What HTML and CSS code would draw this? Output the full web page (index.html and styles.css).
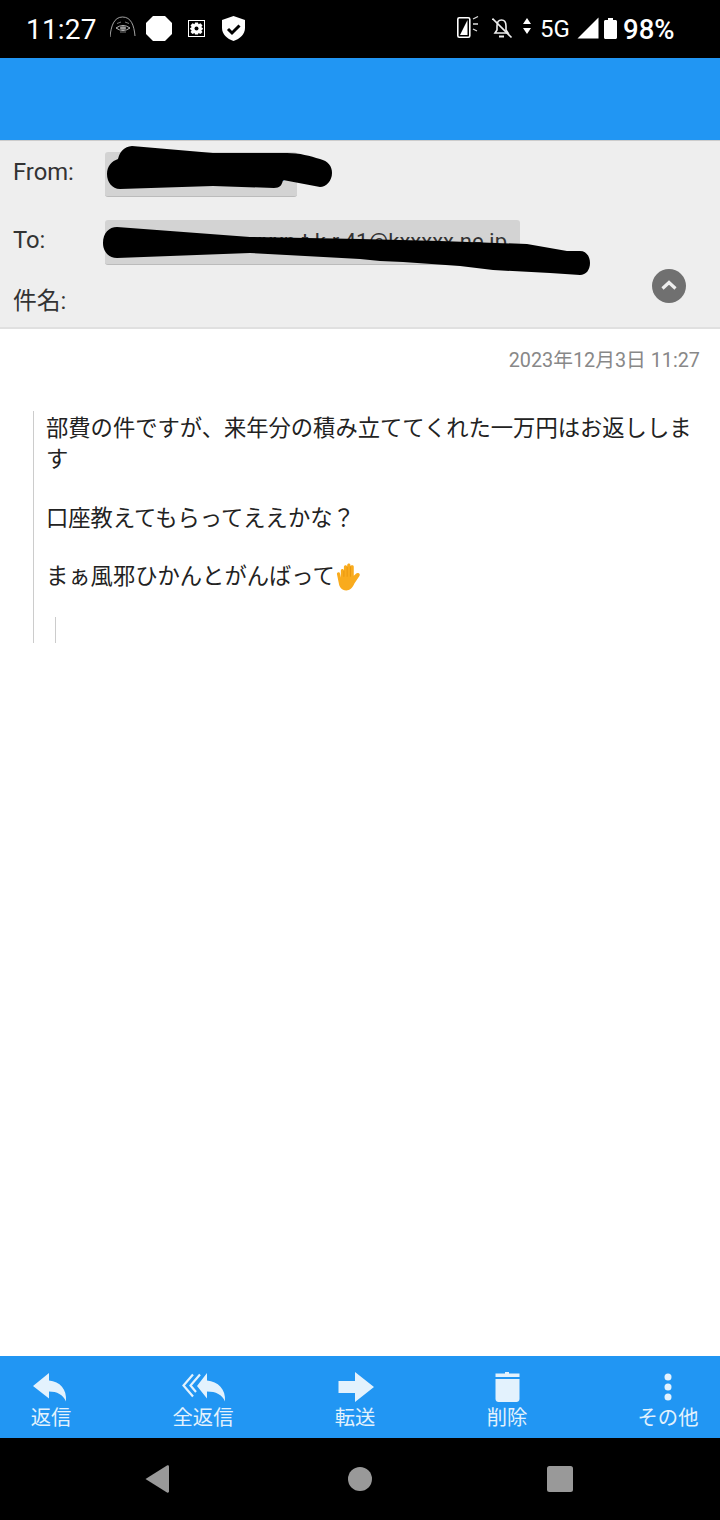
FILE: index.html
```html
<!DOCTYPE html>
<html lang="ja">
<head>
<meta charset="utf-8">
<title>メール</title>
<link rel="stylesheet" href="styles.css">
</head>
<body>
<div class="phone">
  <div class="status">
    <span class="time">11:27</span>
    <svg width="36" height="30" viewBox="110 15 36 30"><path d="M110 38C111 27 114 18 122.500 18C131 18 134 26 135 37" fill="none" stroke="#ccc" stroke-width=".8"/><path d="M116 29Q123 24 130 29Q123 34 116 29Z" fill="none" stroke="#bbb" stroke-width="1"/><ellipse cx="123" cy="29" rx="3" ry="1.800" fill="#999"/><path d="M117 24.500L121 23M129 24.500L125 23M120 33H126" stroke="#999" stroke-width=".8"/></svg>
    <svg width="42" height="30" viewBox="146 15 42 30"><path d="M153 17H165L172 24V35L165 42H153L146 35V24Z" fill="#fff"/></svg>
    <svg width="34" height="30" viewBox="188 15 34 30"><rect x="188.500" y="21.500" width="16" height="16" fill="none" stroke="#fff"/><path d="M195 23.500H198L198.500 25.200L200.500 24.200L202.500 26.500L201.300 28L203 29.500V30L201.300 31.500L202.500 33L200.500 35L198.500 34L198 35.500H195L194.500 34L192.500 35L190.500 33L191.700 31.500L190 30V29.500L191.700 28L190.500 26.500L192.500 24.200L194.500 25.200Z" fill="#fff"/><circle cx="196.500" cy="29.500" r="2" fill="#000"/></svg>
    <svg width="26" height="30" viewBox="222 15 26 30"><path d="M233.500 17L245 21V29C245 35 240 40 233.500 42C227 40 222 35 222 29V21Z" fill="#fff"/><path d="M228 30L232 34L239.500 26.500" fill="none" stroke="#000" stroke-width="3"/></svg>
    <div class="status-right">
      <svg width="35" height="30" viewBox="456 15 35 30"><rect x="456.800" y="18.800" width="12" height="19.500" rx="1.500" fill="none" stroke="#fff" stroke-width="1.600"/><path d="M459 36L466.500 21V36Z" fill="#fff"/><path d="M472 23L477 20.500M472 28H477M472 33L476 35" stroke="#ddd" stroke-width="1.300" transform="translate(0 -3)"/></svg>
      <svg width="31" height="30" viewBox="491 15 31 30"><path d="M494 34H507L505 31V27C505 23 503 21 500.500 21C498 21 496 23 496 27V31Z" fill="none" stroke="#eee" stroke-width="1.600"/><path d="M498 37.500H503" stroke="#eee" stroke-width="2"/><path d="M491.500 19.500L510.500 38.500" stroke="#eee" stroke-width="1.600"/></svg>
      <svg width="18" height="30" viewBox="522 15 18 30"><path d="M526 19L530 25H522ZM526 35L522 29H530Z" fill="#fff"/></svg>
      <span class="net">5G</span>
      <svg width="27" height="30" viewBox="577 15 27 30"><path d="M577.500 39.500L598.500 18.500V39.500Z" fill="#fff"/></svg>
      <svg width="19" height="30" viewBox="604 15 19 30"><path d="M608 21V19H613V21H615.500C616.300 21 617 21.700 617 22.500V38.500C617 39.300 616.300 40 615.500 40H605.500C604.700 40 604 39.300 604 38.500V22.500C604 21.700 604.700 21 605.500 21Z" fill="#fff"/></svg>
      <span class="batt">98%</span>
    </div>
  </div>
  <div class="appbar"></div>
  <header class="head">
    <div class="row">
      <span class="label">From:</span>
      <span class="chip chip-from">xxxxxxxxxxx k</span>
    </div>
    <div class="row">
      <span class="label">To:</span>
      <span class="chip chip-to">xxxxxxxxxxxxxxxp.t.k.r.41@kxxxxx.ne.jp</span>
    </div>
    <div class="row row-sub">
      <span class="label">件名:</span>
    </div>
    <button class="fold" type="button" aria-label="閉じる"><svg width="34" height="34" viewBox="0 0 34 34"><path d="M10.500 19.500L17 13.500L23.500 19.500" fill="none" stroke="#eee" stroke-width="3.200"/></svg></button>
    <svg class="scribble" width="720" height="188" viewBox="0 140 720 188">
      <path d="M107 173C107 165 112 160 118 158C120 150 124 146 132 145L213 152H287C300 152 310 155 320 158C328 160 332 165 332 172C332 180 326 186 320 186L283 179C282 184 280 187 274 187L213 185L120 188C112 188 107 181 107 173Z"/>
      <path d="M103 242C103 232 109 226 117 226L250 236L360 238L440 240L527 243L567 250H580C586 250 590 255 590 262C590 269 586 274 580 274L550 272L493 269L460 265L403 261L380 260L360 258L250 252L117 257C109 257 103 251 103 242Z"/>
    </svg>
  </header>
  <div class="date">2023年12月3日 11:27</div>
  <main class="mail">
    <blockquote class="quote">
      <p>部費の件ですが、来年分の積み立ててくれた一万円はお返しします</p>
      <p>口座教えてもらってええかな？</p>
      <p>まぁ風邪ひかんとがんばって<svg class="hand" width="27" height="28" viewBox="2 1.500 22 25.500" role="img" aria-label="✋"><path d="M6 15V8.500C6 6.500 8.800 6.500 8.800 8.500V5C8.800 3 11.800 3 11.800 5V3.500C11.800 1.500 14.800 1.500 14.800 3.500V5C14.800 3.200 17.800 3.200 17.800 5V13L19.500 11.500C21.500 9.500 24.500 11.500 22.800 13.500L18.500 20C16.500 24.500 14 26.500 11 26.500C6.500 26.500 4.500 23 4 19L2.500 11.800C2.100 9.800 4.900 9.200 5.300 11.200Z" fill="#f9ab1d"/><path d="M8.800 8.500V14M11.800 5V14M14.800 4.500V14" stroke="#e08e0b" stroke-width=".6"/></svg></p>
      <blockquote class="quote-inner"></blockquote>
    </blockquote>
  </main>
  <nav class="tools">
    <div class="tool">
      <svg width="60" height="32" viewBox="21 1372 60 32"><path d="M33 1386L49 1373V1380.500C60 1381.500 67 1389 66 1401.500C63 1394.500 57 1391.500 49 1391.500V1398.500Z"/></svg>
      <span>返信</span>
    </div>
    <div class="tool">
      <svg width="60" height="32" viewBox="173 1372 60 32"><path d="M197 1386L207 1373V1380.500C218 1381.500 226 1389 225 1401.500C222 1394.500 216 1391.500 207 1391.500V1398.500Z"/><path d="M193 1374.500L183.500 1385.500L193 1396.500M200 1374.500L190.500 1385.500L196 1392" fill="none" stroke="#e3f2fd" stroke-width="2.200"/></svg>
      <span>全返信</span>
    </div>
    <div class="tool">
      <svg width="60" height="32" viewBox="325 1372 60 32"><path d="M338.500 1381H355V1372L374 1387L355 1402V1393H338.500Z"/></svg>
      <span>転送</span>
    </div>
    <div class="tool">
      <svg width="60" height="32" viewBox="477 1372 60 32"><path d="M495.500 1373.500H505V1371.500H509V1373.500H519.500V1377H495.500ZM495.500 1379H519.500V1399C519.500 1401 518 1402 516.500 1402H498.500C497 1402 495.500 1401 495.500 1399Z"/></svg>
      <span>削除</span>
    </div>
    <div class="tool tool-last">
      <svg width="60" height="32" viewBox="638 1372 60 32"><circle cx="668" cy="1377" r="3.500"/><circle cx="668" cy="1387" r="3.500"/><circle cx="668" cy="1397" r="3.500"/></svg>
      <span>その他</span>
    </div>
  </nav>
  <div class="sysnav">
    <svg width="28" height="30" viewBox="145 1464 28 30"><path d="M145.500 1479L167 1465.500C168 1465 169 1465.500 169 1466.500V1491.500C169 1492.500 168 1493 167 1492.500Z"/></svg>
    <svg width="24" height="24" viewBox="0 0 24 24"><circle cx="12" cy="12" r="12"/></svg>
    <svg width="26" height="26" viewBox="0 0 26 26"><rect width="26" height="26" rx="2.500"/></svg>
  </div>
</div>
</body>
</html>
```
FILE: styles.css
```css
* { box-sizing: border-box; }
html, body { margin: 0; padding: 0; }
body { background: #fff; font-family: Roboto, "Noto Sans CJK JP", sans-serif; }
.phone { width: 720px; height: 1520px; display: flex; flex-direction: column; overflow: hidden; }

.status { height: 58px; background: #000; color: #fff; display: flex; align-items: center; padding: 0 46px 0 26px; }
.status svg { display: block; }
.time { font-size: 28px; width: 84px; letter-spacing: .2px; white-space: nowrap; }
.status-right { margin-left: auto; display: flex; align-items: center; }
.net { font-size: 24px; width: 37px; white-space: nowrap; margin-left: -1px; padding-right: 0; }
.batt { font-size: 27.500px; font-weight: 500; width: 51px; white-space: nowrap; }

.appbar { height: 82px; background: #2196f3; flex: none; }

.head { position: relative; height: 189px; flex: none; background: #eee; border-top: 1px solid #ccc; border-bottom: 2px solid #e0e0e0; padding: 11px 0 0 13px; color: #333; font-size: 23.800px; }
.row { display: flex; align-items: center; margin-bottom: 23px; }
.label { width: 92px; flex: none; padding-bottom: 6px; }
.row-sub { margin: -3px 0 0; height: 30px; }
.row-sub .label { padding-bottom: 4px; }
.chip { height: 45px; display: block; background: #d3d3d3; border-radius: 3px; border-bottom: 1px solid #bbb; font-size: 22px; line-height: 44px; color: #333; padding: 0 13px; overflow: hidden; white-space: nowrap; text-align: right; }
.chip-from { width: 192px; }
.chip-to { width: 415px; }
.fold { position: absolute; left: 652px; top: 128px; width: 34px; height: 34px; padding: 0; border: 0; border-radius: 50%; background: #707070; }
.fold svg { display: block; }
.scribble { position: absolute; left: 0; top: 0; }
.scribble path { fill: #000; }

.date { flex: none; height: 61px; padding: 19px 20px 0 0; text-align: right; font-size: 19.800px; line-height: 26px; color: #888; }

.mail { flex: 1; padding: 21px 20px 0 33px; color: #222; font-size: 22.300px; line-height: 31px; }
.quote { margin: 0; padding: 2px 0 0 12px; border-left: 1px solid #ccc; height: 232px; }
.quote p { margin: 0 0 27.500px; }
.quote p:nth-child(3) { height: 31px; }
.hand { display: inline-block; vertical-align: -7px; }
.quote-inner { margin: -2.500px 0 0 9px; height: 26px; border-left: 1px solid #ccc; }

.tools { flex: none; height: 82px; background: #2196f3; display: flex; padding: 16px 0 0 21px; gap: 92px; color: #e3f2fd; }
.tool { width: 60px; display: flex; flex-direction: column; align-items: center; font-size: 20.300px; line-height: 26px; }
.tool svg { display: block; fill: #e3f2fd; }
.tool span { white-space: nowrap; margin-top: 1px; }
.tool-last { margin-left: 9px; }

.sysnav { flex: none; height: 82px; background: #000; display: flex; align-items: center; justify-content: space-between; padding: 0 147px 0 145px; }
.sysnav svg { display: block; fill: #999; }
```
